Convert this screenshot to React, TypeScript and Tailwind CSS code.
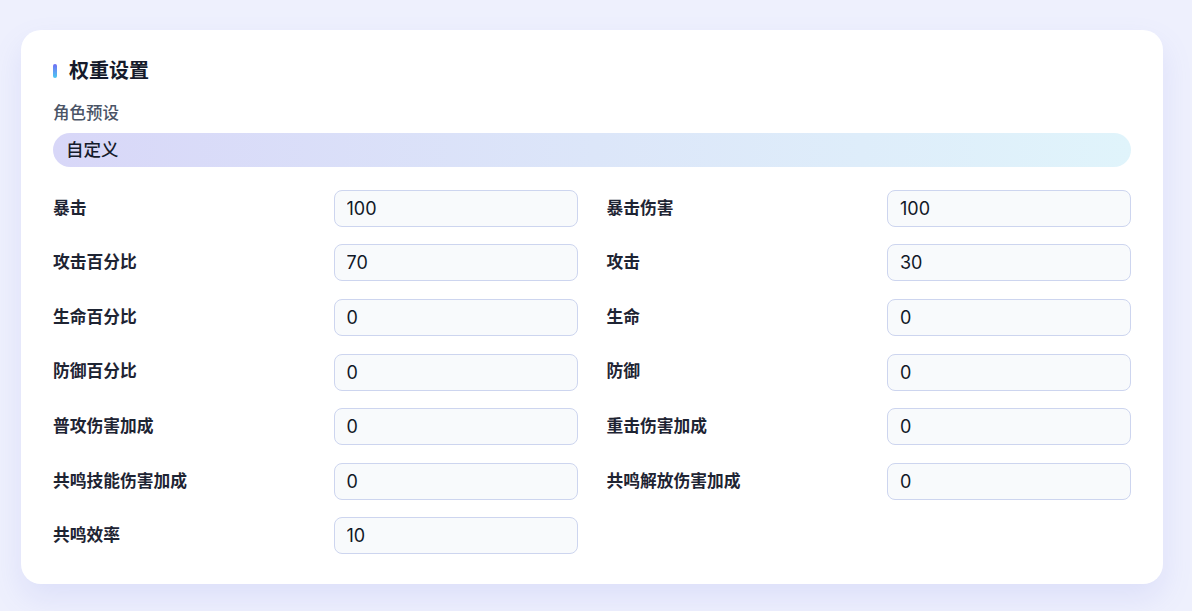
import React from 'react';

type Field = { label: string; value: string };

const fields: Field[] = [
  { label: '暴击', value: '100' },
  { label: '暴击伤害', value: '100' },
  { label: '攻击百分比', value: '70' },
  { label: '攻击', value: '30' },
  { label: '生命百分比', value: '0' },
  { label: '生命', value: '0' },
  { label: '防御百分比', value: '0' },
  { label: '防御', value: '0' },
  { label: '普攻伤害加成', value: '0' },
  { label: '重击伤害加成', value: '0' },
  { label: '共鸣技能伤害加成', value: '0' },
  { label: '共鸣解放伤害加成', value: '0' },
  { label: '共鸣效率', value: '10' },
];

const WeightRow: React.FC<Field> = ({ label, value }) => (
  <div className="flex items-center">
    <span className="flex-1 text-[16.75px] font-semibold text-[#1e2433]">{label}</span>
    <input
      defaultValue={value}
      className="w-[244px] h-[37px] rounded-lg border border-[#cdd5ef] bg-[#f8fafc] px-3 text-[18px] text-[#111827] outline-none"
    />
  </div>
);

export default function App() {
  return (
    <div
      className="min-h-[611px] bg-[#eef0fd] px-[21px] pt-[30px] pb-7"
      style={{ fontFamily: 'Inter, "Noto Sans CJK SC", sans-serif' }}
    >
      <div className="w-[1142px] rounded-[20px] bg-white px-8 pt-[27px] pb-[30px] shadow-[0_14px_30px_rgba(120,130,230,0.14)]">
        <div className="flex items-center gap-3">
          <span className="h-[14px] w-1 rounded-full bg-gradient-to-b from-[#6d6cf3] to-[#45c8f0]" />
          <h2 className="text-[20px] font-bold leading-7 text-[#151b2b]">权重设置</h2>
        </div>

        <div className="mt-[16px] text-[16.5px] font-medium text-[#4a5466]">角色预设</div>
        <div className="mt-[7px] flex h-[34px] items-center rounded-full bg-gradient-to-r from-[#d8d7f8] via-[#dce6f9] to-[#e0f4fb] px-[13px] text-[17.5px] font-medium text-[#151b2b]">
          自定义
        </div>

        <div className="mt-[23px] grid grid-cols-2 gap-x-[29px] gap-y-[17.6px]">
          {fields.map((f) => (
            <WeightRow key={f.label} {...f} />
          ))}
        </div>
      </div>
    </div>
  );
}
